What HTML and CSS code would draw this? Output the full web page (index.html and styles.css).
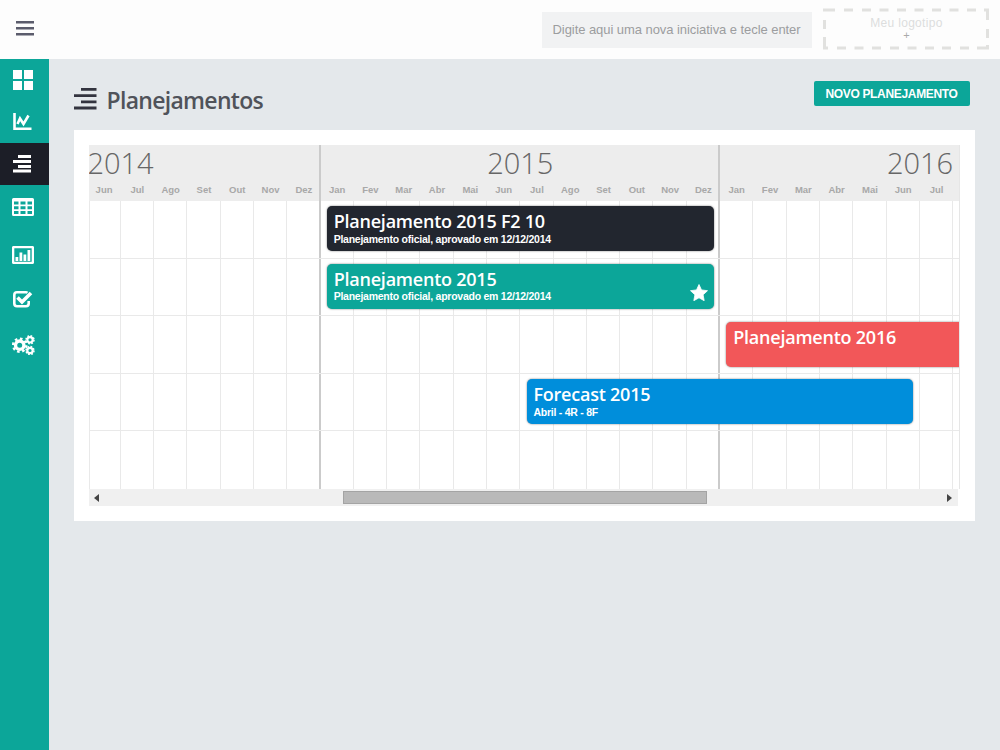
FILE: index.html
```html
<!DOCTYPE html>
<html lang="pt-BR">
<head>
  <meta charset="UTF-8">
  <title>Planejamentos</title>
  <meta name="viewport" content="width=device-width, initial-scale=1.0">
  <link rel="stylesheet" href="styles.css">
</head>
<body>
  <header class="topbar">
    <button class="menu-toggle" aria-label="Menu">
      <svg width="18" height="15" viewBox="0 0 18 15"><path d="M0 1.3h18M0 7.3h18M0 13.3h18" stroke="#5b5c6c" stroke-width="2.6"/></svg>
    </button>
    <input class="new-item" type="text" placeholder="Digite aqui uma nova iniciativa e tecle enter">
    <div class="logo-box">
      <svg class="logo-border" width="167" height="42" viewBox="0 0 167 42"><path d="M0 2h12M21 2h9M39 2h9M56.500 2h9M74 2h9M91.500 2h9M109 2h9M126.500 2h9M144 2h9M161 2h5M164.500 1v11M164.500 21v9M164.500 37v4M0 40h5M14 40h9M31.500 40h9M49 40h9M67 40h9M84.500 40h9M102 40h9M119 40h9M137 40h9M154 40h12M1.500 12v9M1.500 29v12" fill="none" stroke="#e1e1df" stroke-width="3"/></svg>
      <span>Meu logotipo</span>
      <span class="plus">+</span>
    </div>
  </header>

  <div class="layout">
    <nav class="sidebar">
      <a href="#"><svg width="20" height="20" viewBox="0 0 20 20"><path d="M0 0h9v9H0zM11 0h9v9h-9zM0 11h9v9H0zM11 11h9v9h-9z"/></svg></a>
      <a href="#"><svg width="20" height="18" viewBox="0 0 20 18"><path d="M1.500 0v15.700H18.500M4.500 11L7 5.500l3.500 5.500L15.500 2.500" class="line"/></svg></a>
      <a href="#" class="active"><svg width="19" height="18" viewBox="0 0 19 18"><path d="M5 0h13v3H5zM0 5h18v3H0zM5 10h13v3H5zM0 14.500h18v3H0z"/></svg></a>
      <a href="#" class="table"><svg width="22" height="18" viewBox="0 0 22 18"><path fill-rule="evenodd" d="M1.500 0h19Q22 0 22 1.500v15Q22 18 20.500 18h-19Q0 18 0 16.500v-15Q0 0 1.500 0zM2 3.500v3h4.500v-3zM8.500 3.500v3h5v-3zM15.500 3.500v3H20v-3zM2 8.300v3h4.500v-3zM8.500 8.300v3h5v-3zM15.500 8.300v3H20v-3zM2 13.100v3h4.500v-3zM8.500 13.100v3h5v-3zM15.500 13.100v3H20v-3z"/></svg></a>
      <a href="#" class="chart"><svg width="22" height="18" viewBox="0 0 22 18"><rect x="1" y="1" width="20" height="16" rx="1.500" class="line"/><path d="M3.500 11h2.800v4H3.500zM7.500 6.500h2.800V15H7.500zM11.500 8.500h2.800V15h-2.800zM15.500 4h2.800v11h-2.800z"/></svg></a>
      <a href="#" class="check"><svg width="20" height="17" viewBox="0 0 20 17"><path d="M14.500 1.800Q13.800 1.300 13 1.300H4Q1.300 1.300 1.300 4v8.500q0 2.700 2.700 2.700h9q2.700 0 2.700-2.700V10" class="line"/><path d="M4.500 6.500l4.500 4.500 9-9" class="tick"/></svg></a>
      <a href="#" class="gears"><svg width="23" height="20" viewBox="0 0 23 20">
        <circle cx="7.700" cy="10.200" r="4.200" class="gear-ring"/><circle cx="7.700" cy="10.200" r="6.600" class="gear-teeth"/>
        <circle cx="18" cy="4.800" r="2.700" class="gear-ring small"/><circle cx="18" cy="4.800" r="4" class="gear-teeth small"/>
        <circle cx="18" cy="15.500" r="2.700" class="gear-ring small"/><circle cx="18" cy="15.500" r="4" class="gear-teeth small"/>
      </svg></a>
    </nav>

    <main class="content">
      <div class="page-head">
        <svg width="23" height="22" viewBox="0 0 23 22"><path d="M7 0h15.500v2.800H7zM0 6.200h22.500V9H0zM7 12.400h15.500v2.800H7zM0 18.600h22.500v2.800H0z" fill="#33343f"/></svg>
        <h1>Planejamentos</h1>
        <button class="btn">NOVO PLANEJAMENTO</button>
      </div>

      <section class="card">
        <div class="timeline">
          <div class="track">
            <div class="year y2014">
              <h2>2014</h2>
              <div class="months"><span>Jun</span><span>Jul</span><span>Ago</span><span>Set</span><span>Out</span><span>Nov</span><span>Dez</span></div>
            </div>
            <div class="year y2015">
              <h2>2015</h2>
              <div class="months"><span>Jan</span><span>Fev</span><span>Mar</span><span>Abr</span><span>Mai</span><span>Jun</span><span>Jul</span><span>Ago</span><span>Set</span><span>Out</span><span>Nov</span><span>Dez</span></div>
            </div>
            <div class="year y2016">
              <h2>2016</h2>
              <div class="months"><span>Jan</span><span>Fev</span><span>Mar</span><span>Abr</span><span>Mai</span><span>Jun</span><span>Jul</span></div>
            </div>
          </div>
          <div class="rows">
            <div class="row">
              <div class="plan dark from-jan15"><h3>Planejamento 2015 F2 10</h3><p>Planejamento oficial, aprovado em 12/12/2014</p></div>
            </div>
            <div class="row">
              <div class="plan green from-jan15"><h3>Planejamento 2015</h3><p>Planejamento oficial, aprovado em 12/12/2014</p>
                <svg class="star" width="18" height="17" viewBox="0 0 18 17"><path d="M9 .5l2.500 5.400 6 .8-4.400 4.100 1.100 5.900L9 13.800l-5.200 2.900 1.100-5.900L.5 6.700l6-.8z" fill="#fff" stroke="#fff" stroke-width=".8" stroke-linejoin="round"/></svg>
              </div>
            </div>
            <div class="row">
              <div class="plan red from-jan16"><h3>Planejamento 2016</h3></div>
            </div>
            <div class="row">
              <div class="plan blue from-jul15"><h3>Forecast 2015</h3><p>Abril - 4R - 8F</p></div>
            </div>
            <div class="row"></div>
          </div>
        </div>
        <div class="scrollbar">
          <span class="arrow left"></span>
          <span class="thumb"></span>
          <span class="arrow right"></span>
        </div>
      </section>
    </main>
  </div>
</body>
</html>
```
FILE: styles.css
```css
* {
  box-sizing: border-box;
}

body {
  margin: 0;
  height: 750px;
  overflow: hidden;
  display: flex;
  flex-direction: column;
  background: #e4e8eb;
  font-family: "Liberation Sans", Arial, sans-serif;
}

h1, h2, h3, p {
  margin: 0;
}

button {
  border: 0;
  padding: 0;
  background: none;
  cursor: pointer;
}

svg {
  display: block;
  flex: none;
}

/* top bar */
.topbar {
  height: 58.5px;
  flex: none;
  display: flex;
  align-items: center;
  background: #fdfdfd;
  padding: 0 10px 0 16px;
}

.menu-toggle {
  margin-top: -2px;
}

.new-item {
  width: 270px;
  height: 36px;
  margin: 1px 11px 0 auto;
  padding: 0 8px 0 10.500px;
  border: 0;
  background: #f1f2f3;
  font: 13px "Liberation Sans", Arial, sans-serif;
  letter-spacing: -0.06px;
}

.new-item::placeholder {
  color: #9c9d9f;
  opacity: 1;
}

.logo-box {
  position: relative;
  width: 167px;
  height: 42px;
  text-align: center;
  font-size: 12px;
  line-height: 14px;
  padding-top: 8px;
  color: #dcdddd;
}

.logo-box span {
  display: block;
  letter-spacing: 0.3px;
}

.logo-box .plus {
  font-size: 11px;
  line-height: 11px;
  color: #aaa;
}

.logo-border {
  position: absolute;
  top: 0;
  left: 0;
}

.layout {
  flex: 1;
  display: flex;
}

/* side menu */
.sidebar {
  width: 48.5px;
  flex: none;
  background: #0ca699;
}

.sidebar a {
  display: flex;
  height: 42px;
  align-items: center;
  padding-left: 13px;
}

.sidebar .active {
  background: #1c1e27;
}

.sidebar .table {
  height: 46px;
  padding: 0 0 2px 12px;
}

.sidebar .chart {
  height: 48px;
  padding-left: 12px;
}

.sidebar .check {
  height: 41px;
}

.sidebar .gears {
  height: 50px;
  padding-left: 12px;
}

.sidebar svg {
  fill: #fff;
}

.sidebar .line {
  fill: none;
  stroke: #fff;
  stroke-width: 2.6;
}

.sidebar .tick {
  fill: none;
  stroke: #fff;
  stroke-width: 3.6;
}

.gear-ring {
  fill: none;
  stroke: #fff;
  stroke-width: 3.4;
}

.gear-teeth {
  fill: none;
  stroke: #fff;
  stroke-width: 2.4;
  stroke-dasharray: 2.6 2.584;
}

.gear-ring.small {
  stroke-width: 2.2;
}

.gear-teeth.small {
  stroke-width: 1.5;
  stroke-dasharray: 1.7 1.442;
}

/* content */
.content {
  flex: 1;
  min-width: 0;
  padding: 0 25px 0 25.5px;
}

.page-head {
  display: flex;
  height: 71.5px;
  align-items: center;
  padding: 9px 5.500px 0 0;
}

.page-head h1 {
  margin: 2px 0 0 9.500px;
  font: 600 23px/30px "Open Sans", sans-serif;
  letter-spacing: -0.7px;
  color: #50535a;
}

.btn {
  width: 156px;
  height: 25px;
  margin: -10px 0 0 auto;
  border-radius: 2px;
  background: #0ca699;
  color: #fff;
  font: bold 12px "Liberation Sans", Arial, sans-serif;
  letter-spacing: -0.33px;
}

.card {
  height: 391px;
  padding: 15px;
  background: #fff;
}

/* timeline */
.timeline {
  --month: 33.3px;
  --year-lines: linear-gradient(90deg, transparent 232px, #cbcbcb 232px 234px, transparent 234px 631.400px, #cbcbcb 631.400px 633.400px, transparent 633.400px);
  height: 344px;
  overflow-x: clip;
  border-right: 1px solid #e6e6e6;
}

.track {
  display: flex;
  width: 900px;
  height: 56px;
  margin-left: -1.600px;
  background: var(--year-lines), #ededed;
}

.year {
  text-align: center;
}

.y2014 {
  width: 233.1px;
}

.y2015 {
  width: 399.6px;
}

.year h2 {
  height: 37px;
  font: 300 29px/36px "Open Sans", sans-serif;
  color: #666;
}

.y2014 h2 {
  text-align: left;
}

.y2016 h2 {
  text-align: right;
}

.months {
  display: flex;
  font-size: 9.5px;
  font-weight: bold;
  line-height: 16px;
  color: #a8a8a8;
}

.months span {
  width: var(--month);
  flex: none;
}

.rows {
  width: 900px;
  margin-left: -1.600px;
  background:
    var(--year-lines),
    linear-gradient(90deg, transparent 1.500px, #e9e9e9 1.500px 2.500px, transparent 2.500px),
    repeating-linear-gradient(90deg, #e9e9e9 0 0.400px, transparent 0.400px 32.700px, #e9e9e9 32.700px 33.300px);
}

.row {
  display: grid;
  grid-template-columns: repeat(27, var(--month));
  height: 57.6px;
  padding-top: 5.400px;
  border-bottom: 1px solid #e9e9e9;
}

.row:last-child {
  border-bottom: 0;
}

.plan {
  position: relative;
  height: 45px;
  margin: 0 6.500px 0 6.400px;
  padding: 4px 7px 4px 6.800px;
  border-radius: 5px;
  box-shadow: 0 0 2px rgba(0, 0, 0, 0.55);
  color: #fff;
}

.plan h3 {
  font: 600 18px/23px "Open Sans", sans-serif;
  letter-spacing: -0.23px;
  white-space: nowrap;
}

.plan p {
  font-size: 10.5px;
  font-weight: bold;
  line-height: 12px;
  letter-spacing: -0.25px;
  margin-top: -0.5px;
}

.from-jan15 { grid-column: 8 / span 12; }
.from-jul15 { grid-column: 14 / span 12; }
.from-jan16 { grid-column: 20 / span 8; }

.dark { background: #22262f; }
.green { background: #0ca699; }
.red { background: #f25759; }
.blue { background: #008edb; }

.star {
  position: absolute;
  right: 6px;
  bottom: 8px;
}

.scrollbar {
  display: flex;
  align-items: center;
  width: 869px;
  height: 17px;
  padding: 0 6px 0 5px;
  background: #f0f0f0;
}

.thumb {
  width: 364px;
  height: 13px;
  margin-left: 244px;
  background: #b9b9b9;
  border: 1px solid #a4a4a4;
}

.arrow {
  border: 4px solid transparent;
}

.left {
  border-left: 0;
  border-right: 5px solid #444;
}

.right {
  margin-left: auto;
  border-right: 0;
  border-left: 5px solid #444;
}
```
